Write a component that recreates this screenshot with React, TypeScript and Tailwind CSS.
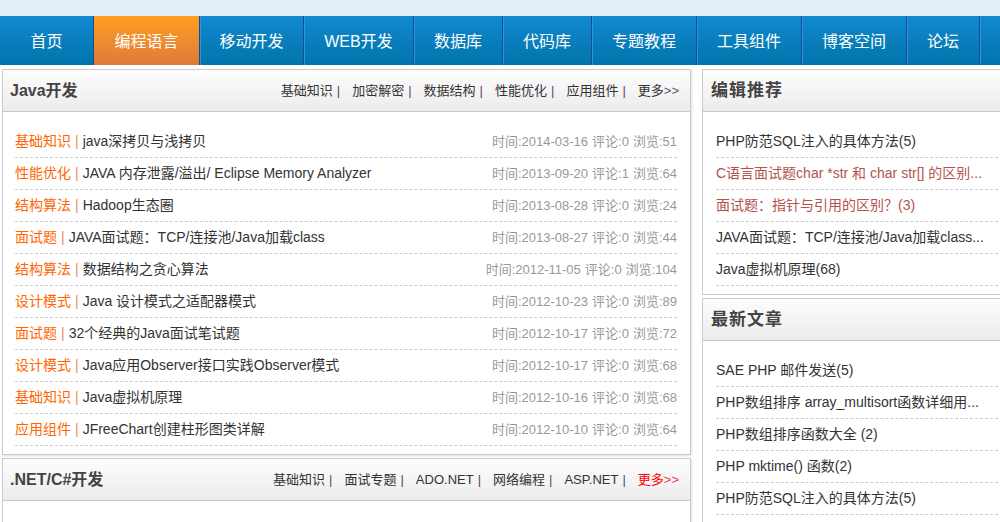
import React from "react";

const font = { fontFamily: '"Liberation Sans", "Noto Sans CJK SC", sans-serif' };

const navItems = [
  { t: "首页", w: 93 },
  { t: "编程语言", w: 106, active: true },
  { t: "移动开发", w: 104 },
  { t: "WEB开发", w: 110 },
  { t: "数据库", w: 89 },
  { t: "代码库", w: 89 },
  { t: "专题教程", w: 105 },
  { t: "工具组件", w: 105 },
  { t: "博客空间", w: 105 },
  { t: "论坛", w: 73 },
  { t: "", w: 40 },
];

const javaRows = [
  ["基础知识", "java深拷贝与浅拷贝", "2014-03-16", "0", "51"],
  ["性能优化", "JAVA 内存泄露/溢出/ Eclipse Memory Analyzer", "2013-09-20", "1", "64"],
  ["结构算法", "Hadoop生态圈", "2013-08-28", "0", "24"],
  ["面试题", "JAVA面试题：TCP/连接池/Java加载class", "2013-08-27", "0", "44"],
  ["结构算法", "数据结构之贪心算法", "2012-11-05", "0", "104"],
  ["设计模式", "Java 设计模式之适配器模式", "2012-10-23", "0", "89"],
  ["面试题", "32个经典的Java面试笔试题", "2012-10-17", "0", "72"],
  ["设计模式", "Java应用Observer接口实践Observer模式", "2012-10-17", "0", "68"],
  ["基础知识", "Java虚拟机原理", "2012-10-16", "0", "68"],
  ["应用组件", "JFreeChart创建柱形图类详解", "2012-10-10", "0", "64"],
];

const editor: [string, boolean][] = [
  ["PHP防范SQL注入的具体方法(5)", false],
  ["C语言面试题char *str 和 char str[] 的区别...", true],
  ["面试题：指针与引用的区别？(3)", true],
  ["JAVA面试题：TCP/连接池/Java加载class...", false],
  ["Java虚拟机原理(68)", false],
];

const latest: [string, boolean][] = [
  ["SAE PHP 邮件发送(5)", false],
  ["PHP数组排序 array_multisort函数详细用...", false],
  ["PHP数组排序函数大全 (2)", false],
  ["PHP mktime() 函数(2)", false],
  ["PHP防范SQL注入的具体方法(5)", false],
];

function Header({
  title,
  links,
  redMore,
  big,
}: {
  title: string;
  links?: string[];
  redMore?: boolean;
  big?: boolean;
}) {
  return (
    <div className="h-[42px] flex items-center justify-between border-b border-[#c9c9c9] bg-gradient-to-b from-[#fdfdfd] to-[#ececec] pl-[7px] pr-[11px]">
      <span
        className={`font-bold text-[#444] ${big ? "text-[17px] pl-[1px] tracking-[1px]" : "text-[16px]"}`}
      >
        {title}
      </span>
      {links && (
        <div className="flex items-center text-[13px] text-[#333]">
          {links.map((l) => (
            <span key={l} className="flex items-center">
              {l}
              <span className="ml-[4px] mr-[12px] text-[#6b3a78]">|</span>
            </span>
          ))}
          <span className={redMore ? "text-[#f00]" : "text-[#333]"}>
            更多<span className={redMore ? "text-[#f33]" : "text-[#557]"}>&gt;&gt;</span>
          </span>
        </div>
      )}
    </div>
  );
}

function SideList({ items }: { items: [string, boolean][] }) {
  return (
    <div className="pt-[14px] pb-[8px] pl-[13px] pr-[13px]">
      {items.map(([t, red], i) => (
        <div
          key={i}
          className={`h-[32px] flex items-center border-b border-dashed border-[#ccc] text-[14px] whitespace-nowrap overflow-hidden ${red ? "text-[#b3524e]" : "text-[#333]"}`}
        >
          {t}
        </div>
      ))}
    </div>
  );
}

export default function App() {
  return (
    <div className="w-[1000px] h-[522px] overflow-hidden bg-white" style={font}>
      <div className="h-[16px] bg-[#e4eef8]" />
      <div className="h-[49px] flex bg-gradient-to-b from-[#1289d1] to-[#0074aa]">
        {navItems.map((n, i) => (
          <div
            key={i}
            style={{ width: n.w }}
            className={`h-full shrink-0 flex items-center justify-center pt-[2px] text-white text-[16px] ${
              i > 0 ? "border-l border-[#1c4a92]" : ""
            } ${
              n.active
                ? "bg-gradient-to-b from-[#ff9e22] to-[#df7a37]"
                : i > 0
                ? "shadow-[inset_1px_0_0_#2e96da]"
                : ""
            }`}
          >
            {n.t}
          </div>
        ))}
      </div>
      <div className="flex items-start pt-[4px] pl-[2px] gap-[11px]">
        <div className="w-[689px] shrink-0 flex flex-col gap-[3px]">
          <div className="border border-[#cbcbcb] bg-white shadow-[1px_1px_2px_rgba(0,0,0,0.12)]">
            <Header
              title="Java开发"
              links={["基础知识", "加密解密", "数据结构", "性能优化", "应用组件"]}
            />
            <div className="pt-[14px] pb-[8px] pl-[12px] pr-[13px]">
              {javaRows.map(([cat, title, date, c, v], i) => (
                <div
                  key={i}
                  className="h-[32px] flex items-center justify-between border-b border-dashed border-[#ccc] whitespace-nowrap"
                >
                  <span className="text-[14px] text-[#333]">
                    <span className="text-[#f60]">{cat}</span>
                    <span className="text-[#f08a60] mx-[4px]">|</span>
                    {title}
                  </span>
                  <span className="text-[13px] text-[#999] flex">
                    <span>时间:{date}</span>
                    <span className="ml-[4px]">评论:{c}</span>
                    <span className="ml-[4px]">浏览:{v}</span>
                  </span>
                </div>
              ))}
            </div>
          </div>
          <div className="border border-[#cbcbcb] bg-white h-[80px] shadow-[1px_1px_2px_rgba(0,0,0,0.12)]">
            <Header
              title=".NET/C#开发"
              links={["基础知识", "面试专题", "ADO.NET", "网络编程", "ASP.NET"]}
              redMore
            />
          </div>
        </div>
        <div className="w-[310px] shrink-0 flex flex-col gap-[3px]">
          <div className="border border-[#cbcbcb] bg-white">
            <Header title="编辑推荐" big />
            <SideList items={editor} />
          </div>
          <div className="border border-[#cbcbcb] bg-white">
            <Header title="最新文章" big />
            <SideList items={latest} />
          </div>
        </div>
      </div>
    </div>
  );
}
